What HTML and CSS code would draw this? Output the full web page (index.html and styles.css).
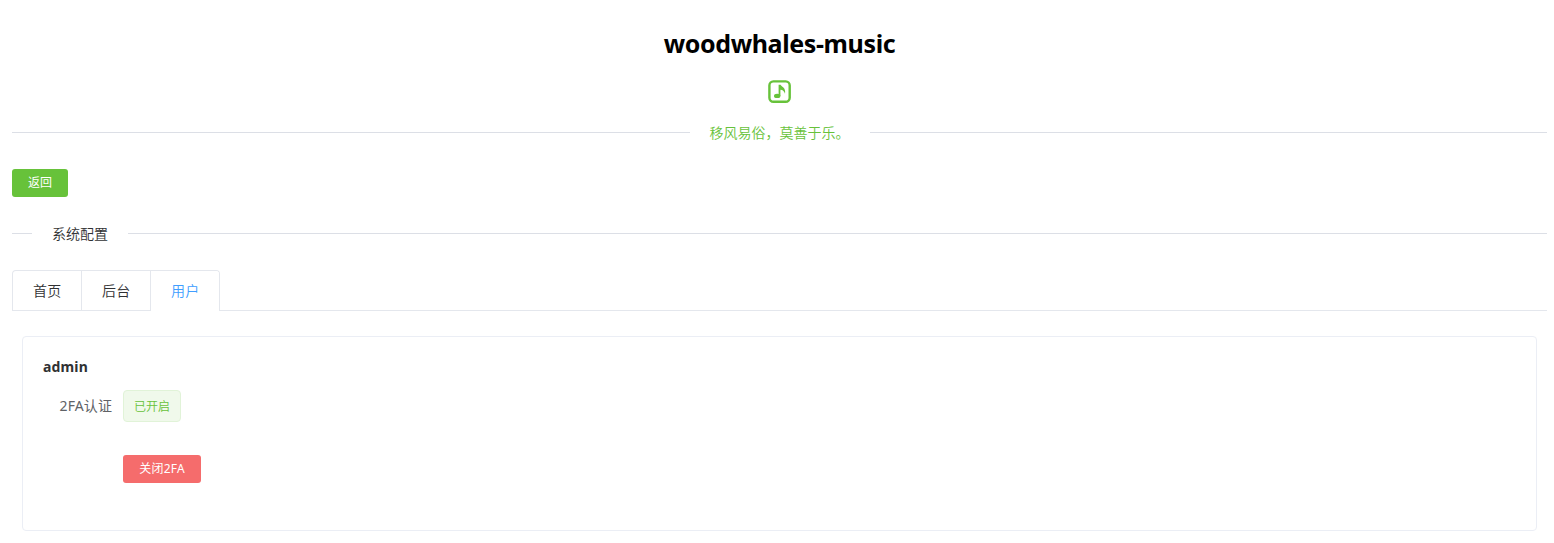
FILE: index.html
```html
<!DOCTYPE html>
<html lang="zh-CN">
<head>
<meta charset="utf-8">
<title>woodwhales-music</title>
<link rel="stylesheet" href="styles.css">
</head>
<body>
<header class="site-header">
  <h1 class="site-title">woodwhales-music</h1>
  <svg class="logo" width="24" height="24" viewBox="0 0 24 24" aria-hidden="true">
    <rect x="1.400" y="1.400" width="20.300" height="20.300" rx="4" fill="none" stroke="#67c23a" stroke-width="2.400"/>
    <ellipse cx="9.200" cy="15.900" rx="3.200" ry="2.200" fill="#67c23a"/>
    <path d="M10.600 4.800h1.900c.5 1.700 5.800 2.700 4.500 9-.6-2.500-2-3.900-4.600-4.100v6.200h-1.800z" fill="#67c23a"/>
  </svg>
</header>
<div class="divider divider-center"><span class="divider-text slogan">移风易俗，莫善于乐。</span></div>
<button class="btn btn-success">返回</button>
<div class="divider divider-left"><span class="divider-text">系统配置</span></div>
<nav class="tabs">
  <div class="tab-list">
    <a class="tab">首页</a>
    <a class="tab">后台</a>
    <a class="tab active">用户</a>
  </div>
</nav>
<section class="card">
  <h2 class="card-title">admin</h2>
  <div class="form-row">
    <span class="label">2FA认证</span>
    <span class="tag">已开启</span>
  </div>
  <button class="btn btn-danger">关闭2FA</button>
</section>
</body>
</html>
```
FILE: styles.css
```css
* { box-sizing: border-box; }
body {
  margin: 0;
  padding: 0 7px 0 12px;
  background: #fff;
  color: #303133;
  font-family: "Noto Sans", "Noto Sans CJK SC", sans-serif;
  font-size: 14px;
  font-weight: 350;
}
.site-header {
  display: flex;
  flex-direction: column;
  align-items: center;
  padding-top: 26px;
}
.site-title {
  margin: 0;
  height: 34px;
  line-height: 34px;
  font-size: 25px;
  font-weight: 700;
  letter-spacing: -0.37px;
  color: #000;
  white-space: nowrap;
}
.logo { display: block; margin-top: 20px; }
.divider {
  display: flex;
  align-items: center;
  height: 20px;
  line-height: 20px;
}
.divider::before, .divider::after {
  content: "";
  flex: 1;
  height: 1px;
  background: #dcdfe6;
}
.divider-text { padding: 2px 20px 0; white-space: nowrap; }
.divider-center { margin-top: 18px; }
.slogan { color: #67c23a; width: 180px; }
.divider-left { margin-top: 26px; }
.divider-left::before { flex: 0 0 20px; }
.btn {
  display: block;
  height: 28px;
  padding: 0;
  border: 0;
  border-radius: 3px;
  color: #fff;
  font: 400 12px/28px "Noto Sans", "Noto Sans CJK SC", sans-serif;
  text-align: center;
}
.btn-success { width: 56px; margin-top: 27px; background: #67c23a; }
.btn-danger { width: 78px; margin: 33px 0 0 80px; background: #f56c6c; letter-spacing: 0.2px; }
.tabs { display: flex; margin-top: 27px; height: 41px; border-bottom: 1px solid #e4e7ed; }
.tab-list {
  display: flex;
  height: 41px;
  border: 1px solid #e4e7ed;
  border-bottom: 0;
  border-radius: 4px 4px 0 0;
}
.tab { width: 69px; padding-left: 20px; line-height: 40px; letter-spacing: 0.3px; }
.tab:first-child { width: 68px; }
.tab + .tab { border-left: 1px solid #e4e7ed; }
.tab.active { color: #409eff; background: #fff; border-top-right-radius: 3px; }
.card {
  margin: 25px 10px 0;
  height: 195px;
  padding: 20px;
  border: 1px solid #ebeef5;
  border-radius: 4px;
}
.card-title { margin: 0; font-size: 14px; line-height: 20px; letter-spacing: 0.15px; }
.form-row { display: flex; align-items: center; margin-top: 13px; height: 32px; }
.label {
  width: 80px;
  height: 32px;
  padding-right: 11px;
  line-height: 32px;
  font-weight: 400;
  letter-spacing: 0.1px;
  text-align: right;
  color: #606266;
}
.tag {
  width: 58px;
  height: 32px;
  border: 1px solid #e1f3d8;
  border-radius: 4px;
  background: #f0f9eb;
  color: #67c23a;
  font-size: 12px;
  line-height: 32px;
  text-align: center;
}
```
